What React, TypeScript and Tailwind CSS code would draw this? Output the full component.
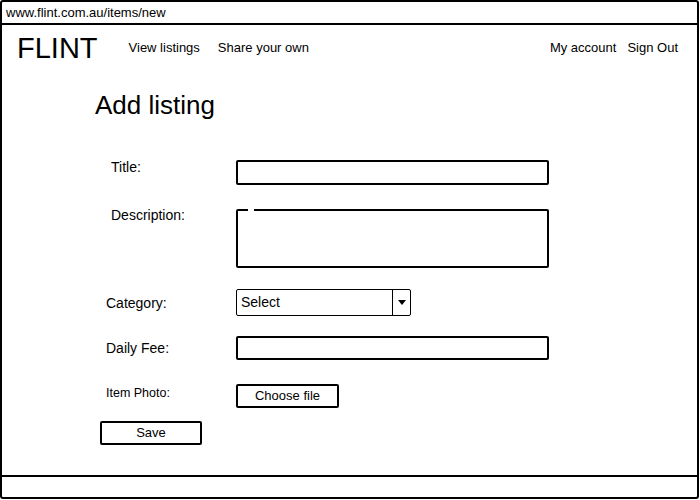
export default function App() {
  return (
    <div
      className="flex h-[499px] w-[699px] flex-col rounded-[3px] border-2 border-black bg-white text-black"
      style={{ fontFamily: '"Liberation Sans", Arial, sans-serif' }}
    >
      <div className="flex h-[23px] items-center border-b-2 border-black pl-[4px] text-[13px]">
        www.flint.com.au/items/new
      </div>

      <main className="flex-1">
        <nav className="flex h-[46px] items-center pl-[15px] pr-[19px]">
          <span className="text-[29px] leading-none">FLINT</span>
          <span className="ml-[31px] text-[13px]">View listings</span>
          <span className="ml-[18px] text-[13px]">Share your own</span>
          <span className="ml-auto text-[13px]">My account</span>
          <span className="ml-[11px] text-[13px]">Sign Out</span>
        </nav>

        <h1 className="mt-[18px] pl-[93px] text-[26px] leading-[32px]">Add listing</h1>

        <form className="mt-[36px] flex flex-col pl-[104px] text-[14px]">
          <div className="flex items-start">
            <label className="w-[130px] pl-[5px] leading-[20px]">Title:</label>
            <div className="mt-[3px] h-[25px] w-[313px] rounded-[2px] border-2 border-black" />
          </div>

          <div className="mt-[20px] flex items-start">
            <label className="w-[130px] pl-[5px] leading-[20px]">Description:</label>
            <div className="relative mt-[4px] h-[59px] w-[313px] rounded-[2px] border-2 border-black">
              <span className="absolute left-[10px] top-[-2px] h-[2px] w-[6px] bg-white" />
            </div>
          </div>

          <div className="mt-[21px] flex items-center">
            <label className="w-[130px] leading-[20px]">Category:</label>
            <div className="flex h-[27px] w-[175px] rounded-[2px] border-[1.5px] border-black">
              <span className="flex-1 pl-[4px] text-[14px] leading-[24px]">Select</span>
              <span className="flex w-[18px] items-center justify-center border-l-[1.5px] border-black">
                <svg width="8" height="5" viewBox="0 0 8 5">
                  <path d="M0 0h8L4 5z" fill="black" />
                </svg>
              </span>
            </div>
          </div>

          <div className="mt-[20px] flex items-center">
            <label className="w-[130px] leading-[20px]">Daily Fee:</label>
            <div className="h-[24px] w-[313px] rounded-[2px] border-2 border-black" />
          </div>

          <div className="mt-[24px] flex items-start">
            <label className="w-[130px] text-[12.5px] leading-[18px]">Item Photo:</label>
            <button
              type="button"
              className="h-[24px] w-[103px] rounded-[2px] border-2 border-black text-[13px]"
            >
              Choose file
            </button>
          </div>

          <button
            type="button"
            className="ml-[-6px] mt-[13px] h-[24px] w-[102px] rounded-[2px] border-2 border-black text-[13px]"
          >
            Save
          </button>
        </form>
      </main>

      <div className="h-[22px] border-t-2 border-black" />
    </div>
  );
}
